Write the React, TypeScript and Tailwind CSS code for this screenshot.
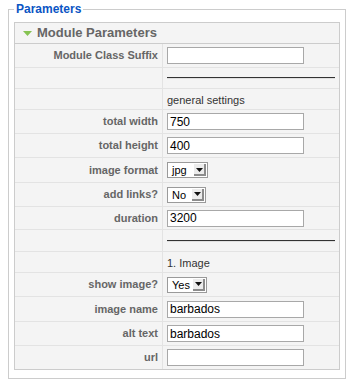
type Row = {
  label?: string;
  kind: 'input' | 'select' | 'hr' | 'text';
  value?: string;
  h: string;
  sw?: string;
  last?: boolean;
};

const ROWS: Row[] = [
  { label: 'Module Class Suffix', kind: 'input', value: '', h: 'h-[24px]' },
  { kind: 'hr', h: 'h-[21px]' },
  { kind: 'text', value: 'general settings', h: 'h-[21px]' },
  { label: 'total width', kind: 'input', value: '750', h: 'h-[24px]' },
  { label: 'total height', kind: 'input', value: '400', h: 'h-[24px]' },
  { label: 'image format', kind: 'select', value: 'jpg', h: 'h-[25px]', sw: 'w-[41px]' },
  { label: 'add links?', kind: 'select', value: 'No', h: 'h-[24px]', sw: 'w-[39px]' },
  { label: 'duration', kind: 'input', value: '3200', h: 'h-[23px]' },
  { kind: 'hr', h: 'h-[22px]' },
  { kind: 'text', value: '1. Image', h: 'h-[21px]' },
  { label: 'show image?', kind: 'select', value: 'Yes', h: 'h-[24px]', sw: 'w-[40px]' },
  { label: 'image name', kind: 'input', value: 'barbados', h: 'h-[25px]' },
  { label: 'alt text', kind: 'input', value: 'barbados', h: 'h-[24px]' },
  { label: 'url', kind: 'input', value: '', h: 'h-[23px]', last: true },
];

function FakeSelect({ value, w }: { value: string; w?: string }) {
  return (
    <div className={`flex h-[16px] ${w ?? 'w-[40px]'} items-stretch border border-[#9a9a9a] bg-white`}>
      <span className="flex-1 pl-[4px] text-[11px] leading-[14px] text-black">{value}</span>
      <span className="my-[1px] mr-[1px] flex w-[12px] items-center justify-center bg-[#ececec] shadow-[inset_-2px_-2px_0_#8c8c8c]">
        <svg width="7" height="4" viewBox="0 0 7 4" className="-mt-[1px] -ml-[1px]">
          <path d="M0 0h7L3.5 4z" fill="#111" />
        </svg>
      </span>
    </div>
  );
}

function ValueCell({ row }: { row: Row }) {
  if (row.kind === 'input') {
    return (
      <div className="flex h-[17px] w-[137px] items-center border border-[#a8a8a8] bg-white pl-[2px] text-[12px] text-black">
        {row.value}
      </div>
    );
  }
  if (row.kind === 'select') return <FakeSelect value={row.value ?? ''} w={row.sw} />;
  if (row.kind === 'hr') {
    return <div className="mr-[4px] h-[2px] w-full border-t border-[#333] border-b border-b-[#e0e0e0]" />;
  }
  return <span className="pt-[2px] text-[11px] text-[#333]">{row.value}</span>;
}

export default function App() {
  return (
    <div className="min-h-[389px] bg-white font-['Liberation_Sans',Arial,sans-serif]">
      <fieldset className="ml-[8px] w-[338px] border border-[#ccc] px-[5px] pt-[4px] pb-[8px]">
        <legend className="px-[2px] text-[12px] leading-[18px] font-bold text-[#0b55c4]">Parameters</legend>

        <div className="border border-[#ccc] bg-[#f4f4f4]">
          {/* Panel title */}
          <div className="flex h-[21px] items-center border-b border-[#ccc] pl-[8px]">
            <svg width="9" height="5" viewBox="0 0 9 5" className="mr-[5px] mt-[1px]">
              <path d="M0 0h9L4.5 5z" fill="#86c352" />
            </svg>
            <span className="text-[13px] font-bold text-[#666]">Module Parameters</span>
          </div>

          {ROWS.map((row, i) => (
            <div key={i} className={`flex ${row.h} ${row.last ? '' : 'border-b border-[#e3e3e3]'}`}>
              <div className="flex w-[148px] shrink-0 items-center justify-end border-r border-[#e3e3e3] pr-[4px] text-[11px] font-bold text-[#666]">
                {row.label}
              </div>
              <div className="flex flex-1 items-center pl-[4px]">
                <ValueCell row={row} />
              </div>
            </div>
          ))}
        </div>
      </fieldset>
    </div>
  );
}
